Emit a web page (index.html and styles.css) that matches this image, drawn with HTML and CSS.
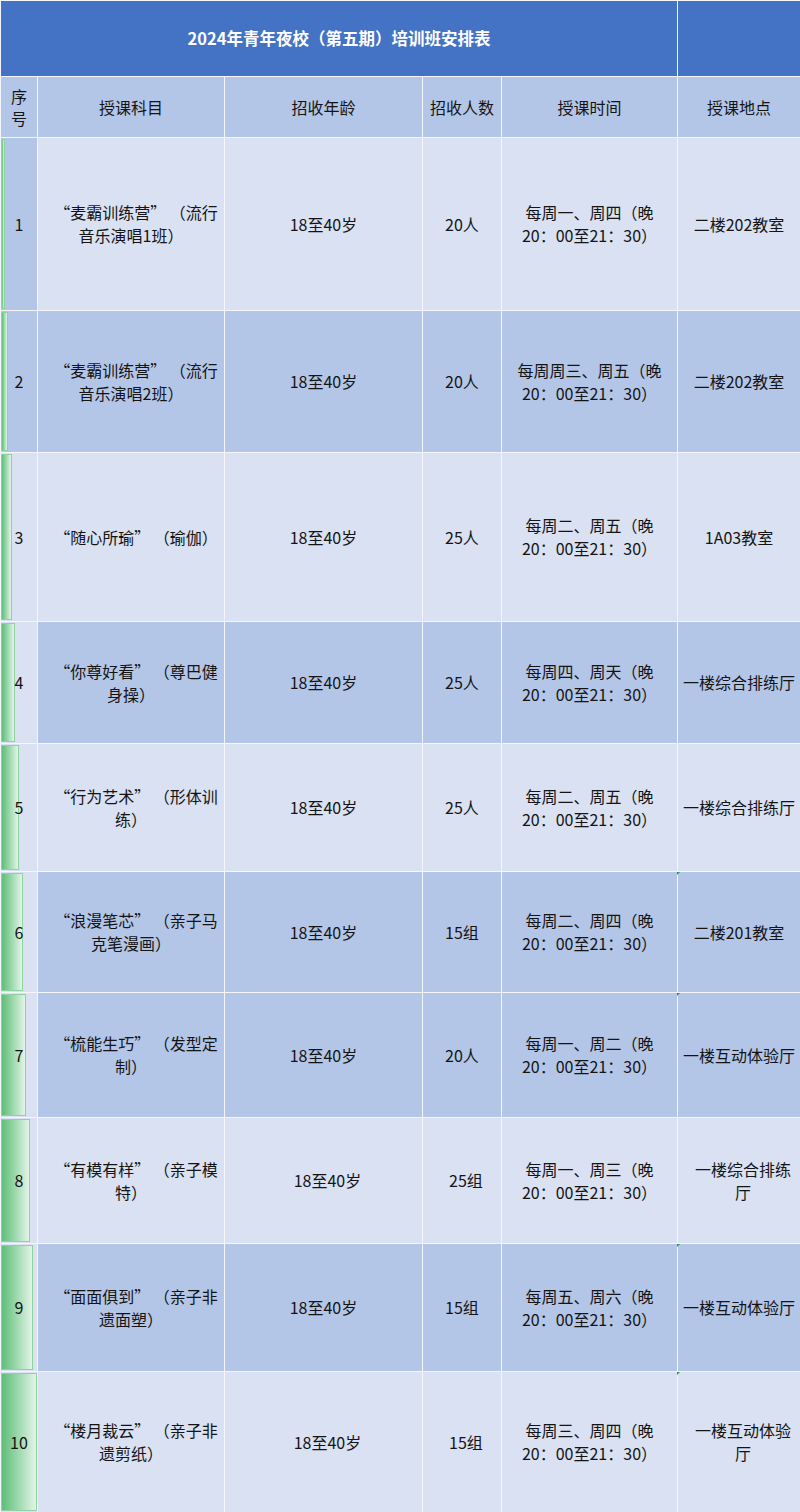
FILE: index.html
```html
<!DOCTYPE html>
<html lang="zh-CN">
<head>
<meta charset="utf-8">
<title>2024年青年夜校（第五期）培训班安排表</title>
<link rel="stylesheet" href="styles.css">
</head>
<body>
<div class="sheet">
  <div class="row title-row">
    <div class="c title">2024年青年夜校（第五期）培训班安排表</div>
    <div class="c title-end"></div>
  </div>

  <div class="row head">
    <div class="c seq-head">序<br>号</div>
    <div class="c">授课科目</div>
    <div class="c">招收年龄</div>
    <div class="c">招收人数</div>
    <div class="c">授课时间</div>
    <div class="c">授课地点</div>
  </div>

  <div class="row light">
    <div class="c seq mid-seq"><span class="bar" style="width:3.6px"></span><span class="num">1</span></div>
    <div class="c"><p class="t"><span class="ind">“麦霸训练营” （流行</span><br>音乐演唱1班）</p></div>
    <div class="c">18至40岁</div>
    <div class="c">20人</div>
    <div class="c">每周一、周四（晚<br>20：00至21：30）</div>
    <div class="c">二楼202教室</div>
  </div>

  <div class="row mid">
    <div class="c seq mid-seq"><span class="bar" style="width:7.2px"></span><span class="num">2</span></div>
    <div class="c"><p class="t"><span class="ind">“麦霸训练营” （流行</span><br>音乐演唱2班）</p></div>
    <div class="c">18至40岁</div>
    <div class="c">20人</div>
    <div class="c">每周周三、周五（晚<br>20：00至21：30）</div>
    <div class="c">二楼202教室</div>
  </div>

  <div class="row light">
    <div class="c seq"><span class="bar" style="width:10.8px"></span><span class="num">3</span></div>
    <div class="c"><p class="t"><span class="ind">“随心所瑜” （瑜伽）</span></p></div>
    <div class="c">18至40岁</div>
    <div class="c">25人</div>
    <div class="c">每周二、周五（晚<br>20：00至21：30）</div>
    <div class="c">1A03教室</div>
  </div>

  <div class="row mid">
    <div class="c seq"><span class="bar" style="width:14.4px"></span><span class="num">4</span></div>
    <div class="c"><p class="t"><span class="ind">“你尊好看” （尊巴健</span><br>身操）</p></div>
    <div class="c">18至40岁</div>
    <div class="c">25人</div>
    <div class="c">每周四、周天（晚<br>20：00至21：30）</div>
    <div class="c">一楼综合排练厅</div>
  </div>

  <div class="row light">
    <div class="c seq"><span class="bar" style="width:18px"></span><span class="num">5</span></div>
    <div class="c"><p class="t"><span class="ind">“行为艺术” （形体训</span><br>练）</p></div>
    <div class="c">18至40岁</div>
    <div class="c">25人</div>
    <div class="c">每周二、周五（晚<br>20：00至21：30）</div>
    <div class="c">一楼综合排练厅</div>
  </div>

  <div class="row mid">
    <div class="c seq"><span class="bar" style="width:21.6px"></span><span class="num">6</span></div>
    <div class="c"><p class="t"><span class="ind">“浪漫笔芯” （亲子马</span><br>克笔漫画）</p></div>
    <div class="c">18至40岁</div>
    <div class="c">15组</div>
    <div class="c">每周二、周四（晚<br>20：00至21：30）</div>
    <div class="c note">二楼201教室</div>
  </div>

  <div class="row mid">
    <div class="c seq"><span class="bar" style="width:25.2px"></span><span class="num">7</span></div>
    <div class="c"><p class="t"><span class="ind">“梳能生巧” （发型定</span><br>制）</p></div>
    <div class="c">18至40岁</div>
    <div class="c">20人</div>
    <div class="c">每周一、周二（晚<br>20：00至21：30）</div>
    <div class="c note">一楼互动体验厅</div>
  </div>

  <div class="row light">
    <div class="c seq"><span class="bar" style="width:28.8px"></span><span class="num">8</span></div>
    <div class="c"><p class="t"><span class="ind">“有模有样” （亲子模</span><br>特）</p></div>
    <div class="c lead">18至40岁</div>
    <div class="c lead">25组</div>
    <div class="c">每周一、周三（晚<br>20：00至21：30）</div>
    <div class="c lead">一楼综合排练<br>厅</div>
  </div>

  <div class="row mid">
    <div class="c seq"><span class="bar" style="width:32.4px"></span><span class="num">9</span></div>
    <div class="c"><p class="t"><span class="ind">“面面俱到” （亲子非</span><br>遗面塑）</p></div>
    <div class="c">18至40岁</div>
    <div class="c">15组</div>
    <div class="c">每周五、周六（晚<br>20：00至21：30）</div>
    <div class="c note">一楼互动体验厅</div>
  </div>

  <div class="row light">
    <div class="c seq"><span class="bar" style="width:36px"></span><span class="num">10</span></div>
    <div class="c"><p class="t"><span class="ind">“楼月裁云” （亲子非</span><br>遗剪纸）</p></div>
    <div class="c lead">18至40岁</div>
    <div class="c lead">15组</div>
    <div class="c">每周三、周四（晚<br>20：00至21：30）</div>
    <div class="c note lead">一楼互动体验<br>厅</div>
  </div>
</div>
</body>
</html>
```

FILE: styles.css
```css
html, body {
  margin: 0;
  padding: 0;
  background: #ffffff;
}

body {
  font-family: "Noto Sans CJK SC", "Noto Sans", sans-serif;
  font-size: 16px;
  color: #141414;
}

.sheet {
  width: 800px;
  height: 1512px;
  box-sizing: border-box;
  padding: 1px 0 0 1px;
  display: grid;
  grid-template-columns: 36px 186px 197px 78px 175px 122px;
  grid-template-rows: 75px 60px 172px 141px 168px 121px 127px 120px 124px 125px 127px 140px;
  gap: 1px;
  background: #f4f6fb;
  overflow: hidden;
}

.row {
  display: contents;
}

.c {
  display: flex;
  align-items: center;
  justify-content: center;
  text-align: center;
  line-height: 23px;
  padding: 0 2px;
  min-width: 0;
  position: relative;
}

.t {
  margin: 0;
}

.ind {
  padding-left: 10px;
}

.title-row .c {
  background: #4472c4;
}

.title {
  grid-column: 1 / 6;
  color: #ffffff;
  font-weight: 700;
  font-size: 16.5px;
  padding-bottom: 1px;
}

.head .c {
  background: #b4c6e7;
  line-height: 22px;
}

.light .c {
  background: #d9e1f2;
}

.mid .c {
  background: #b4c6e7;
}

.row .seq {
  background: #d9e1f2;
  padding: 0;
}

.row .mid-seq {
  background: #b4c6e7;
}

.bar {
  position: absolute;
  left: 0;
  top: 1px;
  bottom: 1px;
  box-sizing: border-box;
  border: 1px solid #8ed2a0;
  background: linear-gradient(to right, #5fbd79 0%, #a6dcb5 55%, #e4f4e8 100%);
}

.num {
  position: relative;
}

.lead {
  padding-left: 10px;
}

.note::before {
  content: "";
  position: absolute;
  top: 0;
  left: -1px;
  width: 0;
  height: 0;
  border-top: 3px solid #2d9a34;
  border-right: 3px solid transparent;
}
```
